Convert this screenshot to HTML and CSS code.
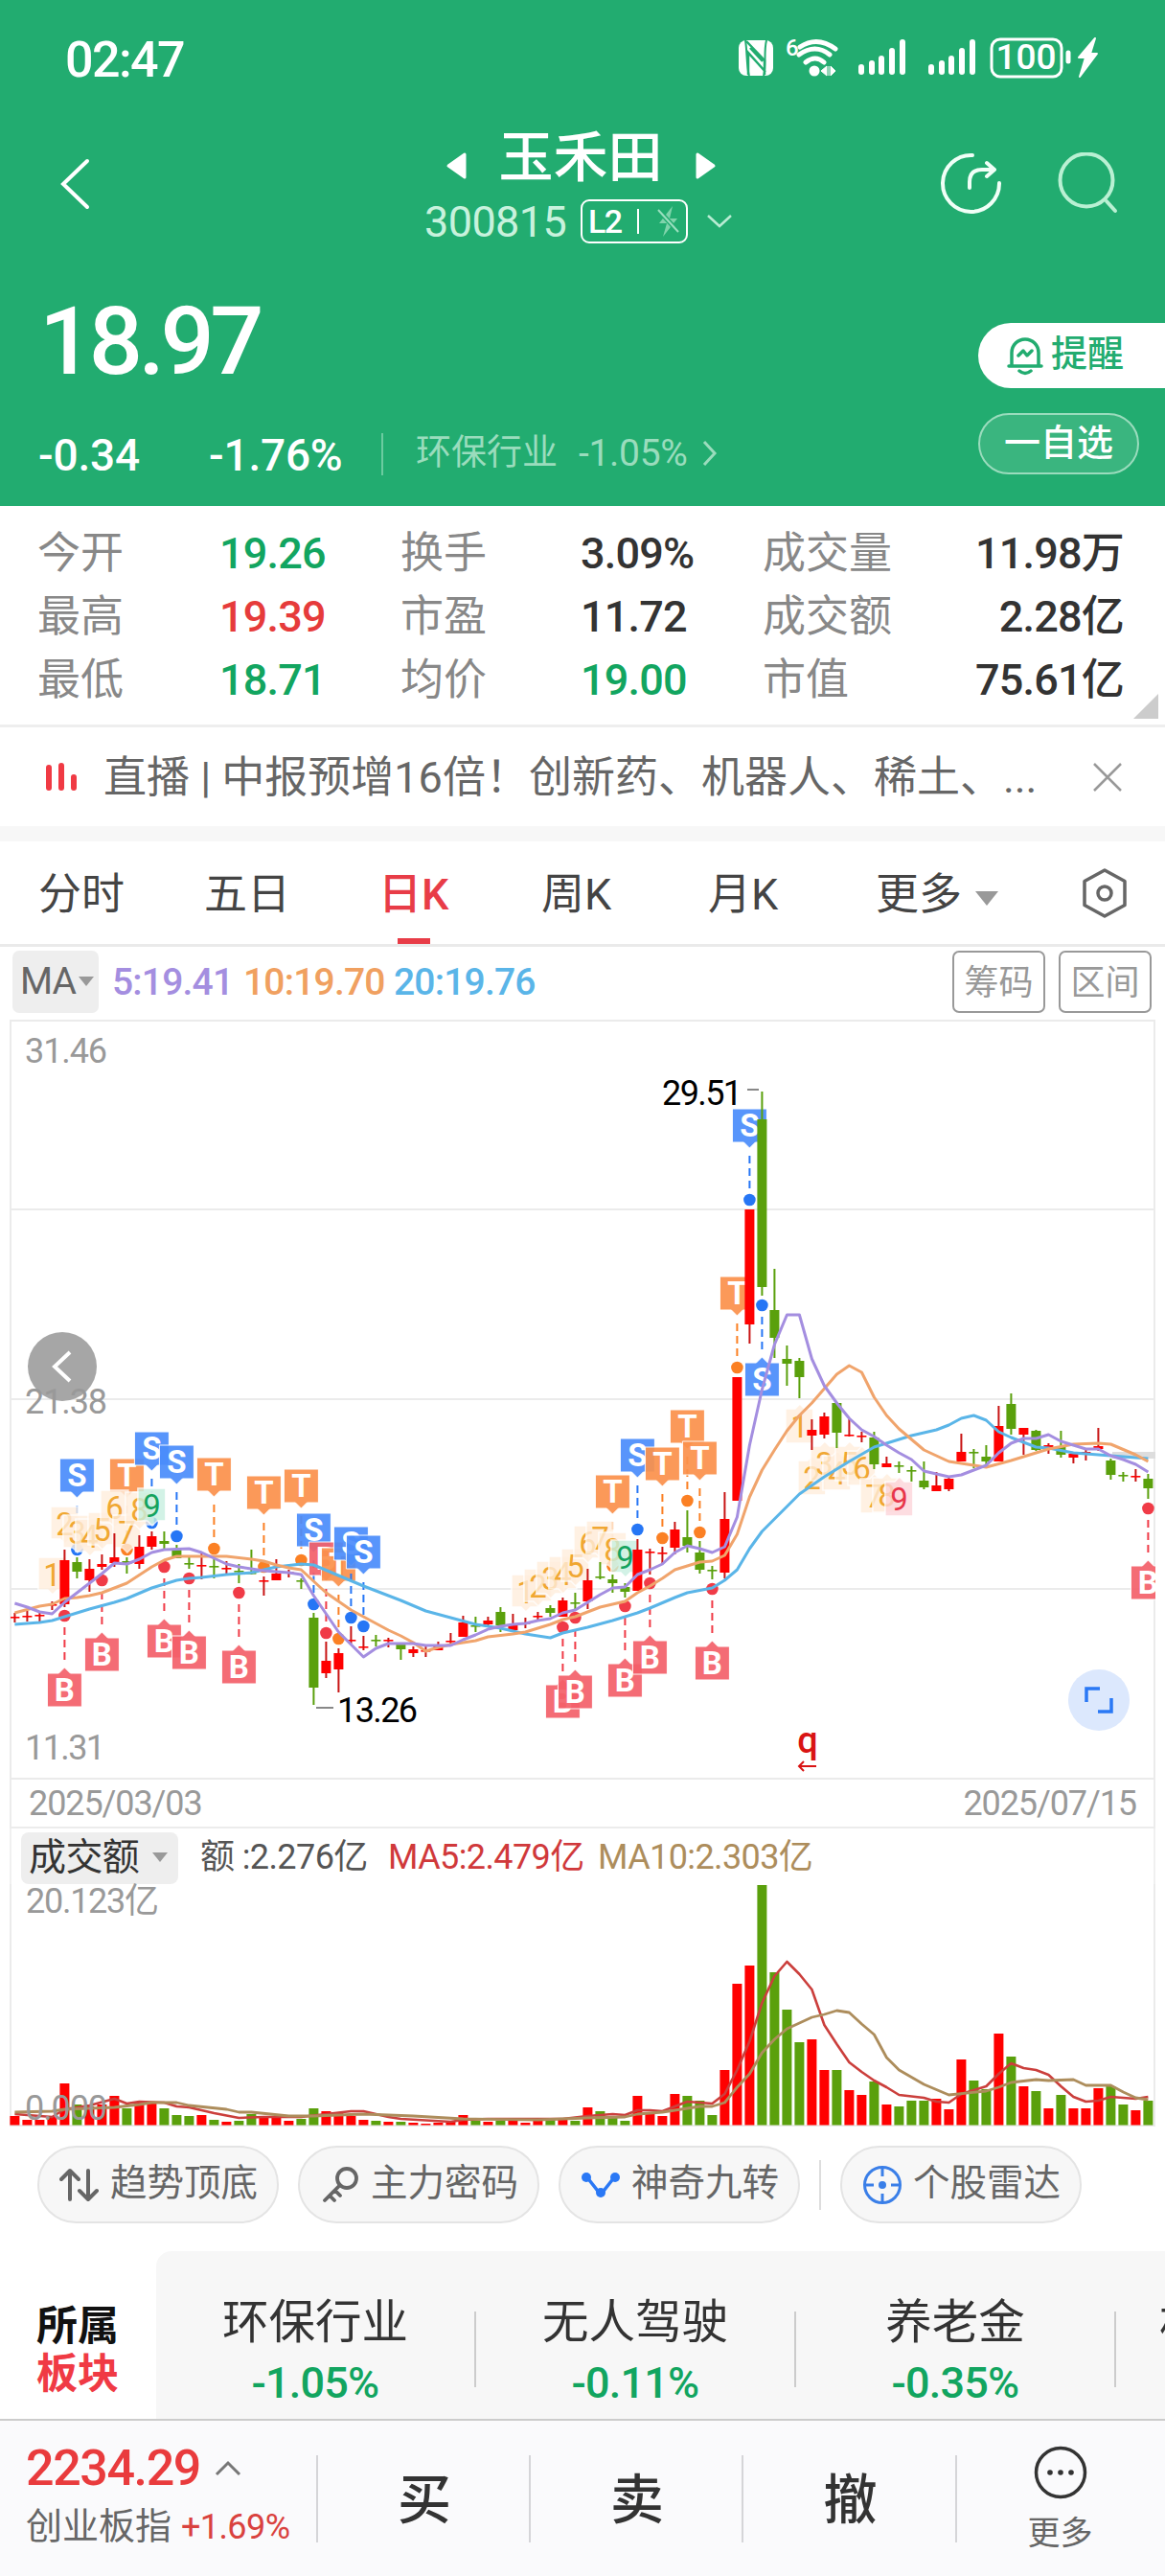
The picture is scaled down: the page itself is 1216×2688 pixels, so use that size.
FILE: index.html
```html
<!DOCTYPE html>
<html lang="zh-CN">
<head>
  <meta charset="UTF-8" />
  <meta name="viewport" content="width=device-width, initial-scale=1" />
  <title>玉禾田 300815</title>
  <link rel="stylesheet" href="styles.css">
</head>
<body>
  <header class="header">
    <div class="status-bar">
      <span class="time">02:47</span>
      <svg class="status-icons" width="380" height="50" viewBox="0 0 380 50" fill="none" stroke="#fff">
        <rect x="2" y="5" width="36" height="37" rx="8" fill="#fff" stroke="none"/>
        <path d="M9 5C11 17 10 30 13 43M31 5C28 17 31 30 28 43" stroke="#22ac70" stroke-width="2"/>
        <path d="M10 6L29 26V41M12 41V18L30 38M14 13L27 27" stroke="#22ac70" stroke-width="2.5"/>
        <text x="51" y="21" class="wifi-gen">6</text>
        <g stroke-width="5" stroke-linecap="round">
          <path d="M66 12Q84 0 103 14M65 20Q82 8 97 20M72 28Q82 20 91 28"/>
        </g>
        <circle cx="81" cy="37" r="5.5" fill="#fff" stroke="none"/>
        <path d="M88 37l6-5v10zM96 32v10M103 37l-5-5v10z" fill="#fff" stroke-width="1"/>
        <g stroke-width="6" stroke-linecap="round">
          <path d="M130 33v5M141 29v9M151 24v14M162 16v22M173 7v31"/>
          <path d="M203 33v5M214 29v9M224 24v14M235 16v22M246 7v31"/>
        </g>
        <rect x="266" y="4" width="73" height="39" rx="9" stroke-width="3"/>
        <text x="302" y="35" text-anchor="middle" class="battery">100</text>
        <path d="M346 18v9" stroke-width="5" stroke-linecap="round"/>
        <path d="M374 3L357 23h7l-6 20 18-24h-7z" fill="#fff" stroke="#fff" stroke-width="2" stroke-linejoin="round"/>
      </svg>
    </div>

    <div class="title-bar">
      <svg class="back" width="36" height="54" viewBox="0 0 36 54" fill="none" stroke="#fff" stroke-width="4"><path d="M31 3L6 27l25 24" stroke-linecap="round"/></svg>
      <div class="title">
        <div class="name-row">
          <svg width="22" height="30" viewBox="0 0 22 30"><path d="M20 3v24L3 15z" fill="#fff" stroke="#fff" stroke-width="3" stroke-linejoin="round"/></svg>
          <h1>玉禾田</h1>
          <svg width="22" height="30" viewBox="0 0 22 30"><path d="M2 3v24l17-12z" fill="#fff" stroke="#fff" stroke-width="3" stroke-linejoin="round"/></svg>
        </div>
        <div class="code-row">
          <span class="code">300815</span>
          <span class="level">L2<i></i>
            <svg width="24" height="34" viewBox="0 0 24 34"><path d="M16 1L2 19h8L6 33l15-19h-8z" fill="#7fd4ab"/><path d="M1 5l21 23" stroke="#22ac70" stroke-width="5"/><path d="M1 5l21 23" stroke="#9adfbf" stroke-width="2"/></svg>
          </span>
          <svg class="code-more" width="28" height="16" viewBox="0 0 28 16" fill="none" stroke="#b9ecd3" stroke-width="2.5"><path d="M2 2l12 11L26 2"/></svg>
        </div>
      </div>
      <div class="tools">
        <svg width="66" height="66" viewBox="0 0 66 66" fill="none" stroke="#f0fff7" stroke-width="4" stroke-linecap="round" stroke-linejoin="round"><path d="M34 3A29.500 29.500 0 1 0 62 32M31 37v-6q0-13 13-13h11M49 11l8 7-8 7"/></svg>
        <svg width="66" height="66" viewBox="0 0 66 66" fill="none" stroke="#b9f0d3" stroke-width="4" stroke-linecap="round"><circle cx="31" cy="29" r="27.500"/><path d="M52 51l9 10"/></svg>
      </div>
    </div>

    <div class="quote">
      <div class="price">18.97</div>
      <div class="remind">
        <svg width="38" height="42" viewBox="0 0 38 42" fill="none" stroke="#22ac70" stroke-width="3.500" stroke-linecap="round" stroke-linejoin="round"><path d="M5 31V18a14 14 0 0 1 28 0v13M2 32h34M13 37q6 5 12 0M12 21l5-5 4 5 5-5"/></svg>
        <span>提醒</span>
      </div>
    </div>
    <div class="change-row">
      <span class="chg">-0.34</span>
      <span class="chg">-1.76%</span>
      <i class="sep"></i>
      <span class="industry">环保行业</span>
      <span class="ind-pct">-1.05%</span>
      <svg width="16" height="28" viewBox="0 0 16 28" fill="none" stroke="#9adcbd" stroke-width="3"><path d="M2 2l11 12L2 26"/></svg>
      <span class="optional">一自选</span>
    </div>
  </header>

  <section class="stats">
    <span>今开</span><b class="down">19.26</b><span>换手</span><b>3.09%</b><span>成交量</span><b class="right">11.98万</b>
    <span>最高</span><b class="up">19.39</b><span>市盈</span><b>11.72</b><span>成交额</span><b class="right">2.28亿</b>
    <span>最低</span><b class="down">18.71</b><span>均价</span><b class="down">19.00</b><span>市值</span><b class="right">75.61亿</b>
    <i class="corner"></i>
  </section>

  <section class="notice">
    <svg width="36" height="32" viewBox="0 0 36 32" stroke="#f03a44" stroke-width="6" stroke-linecap="round"><path d="M4 6v21M17 4v23M30 16v11"/></svg>
    <p>直播 | 中报预增16倍！创新药、机器人、稀土、...</p>
    <svg width="30" height="30" viewBox="0 0 30 30" stroke="#999" stroke-width="2.500"><path d="M1 1l28 28M29 1L1 29"/></svg>
  </section>

  <nav class="tabs">
    <a>分时</a><a>五日</a><a class="active">日K</a><a>周K</a><a>月K</a><a>更多<i class="caret"></i></a>
    <svg width="50" height="54" viewBox="0 0 50 54" fill="none" stroke="#666" stroke-width="3.500" stroke-linejoin="round"><path d="M25 3L46 14.500v25L25 51 4 39.500v-25z"/><circle cx="25" cy="27" r="7"/></svg>
  </nav>

  <div class="ma-row">
    <span class="ma-pick">MA<i class="caret small"></i></span>
    <span class="ma5">5:19.41</span>
    <span class="ma10">10:19.70</span>
    <span class="ma20">20:19.76</span>
    <button class="first">筹码</button>
    <button>区间</button>
  </div>

  <svg id="kline" class="kline" width="1216" height="793" viewBox="0 1064 1216 793"></svg>
  <div class="dates"><span>2025/03/03</span><span>2025/07/15</span></div>
  <div class="vol-head">
    <span class="vol-pick">成交额<i class="caret small"></i></span>
    <span class="amount">额 :2.276亿</span>
    <span class="vma5">MA5:2.479亿</span>
    <span class="vma10">MA10:2.303亿</span>
  </div>
  <svg id="volume" class="volume" width="1216" height="254" viewBox="0 1966 1216 254"></svg>

  <div class="chips">
    <span class="chip"><svg width="42" height="40" viewBox="0 0 42 40" fill="none" stroke="#666" stroke-width="4" stroke-linecap="round" stroke-linejoin="round"><path d="M11 35V6M2 14l9-9 9 9M30 5v29M21 26l9 9 9-9"/></svg><span>趋势顶底</span></span>
    <span class="chip"><svg width="42" height="40" viewBox="0 0 42 40" fill="none" stroke="#666" stroke-width="3.800" stroke-linecap="round"><circle cx="28" cy="13" r="10"/><path d="M21 20L5 36M10 31l5 5M16 26l5 5"/></svg><span>主力密码</span></span>
    <span class="chip"><svg width="42" height="40" viewBox="0 0 42 40"><path d="M6 11l15 19L36 11" fill="none" stroke="#2a78f5" stroke-width="3.500"/><g fill="#2a78f5"><circle cx="6" cy="12" r="5"/><circle cx="36" cy="12" r="5"/><circle cx="21" cy="28" r="5"/></g></svg><span>神奇九转</span></span>
    <i class="chip-sep"></i>
    <span class="chip"><svg width="42" height="40" viewBox="0 0 42 40" fill="none" stroke="#3a7fe8" stroke-width="3"><circle cx="21" cy="20" r="18.500"/><path d="M21 2v9M21 29v9M3 20h9M30 20h9"/><circle cx="21" cy="20" r="2.500" fill="#3a7fe8"/></svg><span>个股雷达</span></span>
  </div>

  <section class="sectors">
    <div class="sector-label">所属<em>板块</em></div>
    <div class="sector-list">
      <div class="sector"><p>环保行业</p><b>-1.05%</b></div>
      <div class="sector"><p>无人驾驶</p><b>-0.11%</b></div>
      <div class="sector"><p>养老金</p><b>-0.35%</b></div>
      <div class="sector next"><p>机器人概念</p></div>
    </div>
  </section>

  <footer class="bottom">
    <div class="index">
      <div class="index-val">2234.29
        <svg width="28" height="18" viewBox="0 0 28 18" fill="none" stroke="#777" stroke-width="3"><path d="M2 15L14 3l12 12"/></svg>
      </div>
      <div class="index-name">创业板指<b>+1.69%</b></div>
    </div>
    <div class="action">买</div>
    <div class="action">卖</div>
    <div class="action">撤</div>
    <div class="more">
      <svg width="56" height="56" viewBox="0 0 56 56"><circle cx="28" cy="28" r="25.500" fill="none" stroke="#333" stroke-width="3.500"/><g fill="#333"><circle cx="17" cy="28" r="2.800"/><circle cx="28" cy="28" r="2.800"/><circle cx="39" cy="28" r="2.800"/></g></svg>
      更多
    </div>
  </footer>
  <script src="chart.js"></script>
</body>
</html>
```

FILE: styles.css
```css
* {
  box-sizing: border-box;
}
body {
  margin: 0;
  width: 1216px;
  height: 2688px;
  overflow: hidden;
  background: #fff;
  color: #333;
  font-family: Roboto, "Noto Sans CJK SC", sans-serif;
}
i, em {
  font-style: normal;
}
svg {
  display: block;
  flex: none;
}
h1, p {
  margin: 0;
  font-weight: 400;
}
b {
  font-weight: 400;
}
.header {
  height: 528px;
  background: #22ac70;
  color: #fff;
}
.status-bar {
  height: 124px;
  padding: 0 67px 0 68px;
  display: flex;
  align-items: center;
  justify-content: space-between;
}
.time {
  font-size: 52px;
  font-weight: 500;
  letter-spacing: -1.6px;
}
.status-icons text {
  fill: #fff;
  stroke: none;
}
.wifi-gen {
  font-size: 24px;
  font-weight: 500;
}
.battery {
  font-size: 37px;
  font-weight: 500;
}
.title-bar {
  height: 140px;
  padding: 0 43px 0 60px;
  display: grid;
  grid-template-columns: 366px 360px 1fr;
}
.back {
  margin-top: 41px;
}
.name-row {
  height: 76px;
  display: flex;
  justify-content: center;
  align-items: center;
  gap: 34px;
}
.name-row svg {
  margin-top: 22px;
}
.name-row h1 {
  padding-top: 6px;
  font-size: 57px;
  line-height: 80px;
  font-weight: 500;
}
.code-row {
  display: flex;
  align-items: center;
  height: 62px;
  padding-left: 17px;
}
.code {
  font-size: 45px;
  letter-spacing: -0.6px;
  color: #c8f2dd;
  width: 163px;
}
.level {
  width: 112px;
  height: 46px;
  border: 2px solid #fff;
  border-radius: 9px;
  display: flex;
  align-items: center;
  padding-left: 6px;
  font-size: 34px;
  font-weight: 500;
  letter-spacing: -1.5px;
}
.level i {
  width: 2px;
  height: 26px;
  background: #fff;
  margin: 0 19px 0 16px;
}
.code-more {
  margin-left: 19px;
}
.tools {
  display: flex;
  justify-content: flex-end;
  gap: 56px;
  padding: 35px 4px 0 0;
}
.quote {
  display: flex;
  justify-content: space-between;
  height: 167px;
  padding-left: 41px;
}
.price {
  font-size: 99px;
  line-height: 184px;
  font-weight: 500;
  letter-spacing: -4.5px;
}
.remind {
  margin-top: 73px;
  width: 195px;
  height: 68px;
  border-radius: 34px 0 0 34px;
  background: #fff;
  color: #22ac70;
  display: flex;
  align-items: center;
  gap: 8px;
  padding-left: 30px;
  font-size: 38px;
  line-height: 60px;
  font-weight: 500;
}
.remind span {
  padding-bottom: 4px;
}
.change-row {
  height: 64px;
  display: flex;
  align-items: center;
  padding: 0 27px 0 40px;
  white-space: nowrap;
}
.chg {
  width: 178px;
  font-size: 46px;
  letter-spacing: -0.2px;
  padding-top: 24px;
  font-weight: 500;
}
.change-row .sep {
  width: 2px;
  height: 44px;
  margin: 21px 34px 0 2px;
  background: #6ccba0;
}
.industry {
  font-size: 37px;
  line-height: 50px;
  color: #9adcbd;
  padding-top: 19px;
  width: 170px;
}
.ind-pct {
  font-size: 39px;
  letter-spacing: -0.3px;
  color: #9adcbd;
  padding-top: 20px;
  width: 129px;
}
.change-row svg {
  margin-top: 20px;
}
.optional {
  margin-left: auto;
  width: 168px;
  height: 64px;
  border: 2px solid #9adcbd;
  border-radius: 32px;
  background: #3ab57f;
  font-size: 38px;
  line-height: 59px;
  font-weight: 500;
  text-align: center;
}
.stats {
  height: 231px;
  border-bottom: 3px solid #eee;
  padding: 17px 43px 0 39px;
  display: grid;
  grid-template-columns: 190px 189px 188px 190px 160px 1fr;
  grid-auto-rows: 66px;
  line-height: 66px;
  font-size: 45px;
  color: #888;
  position: relative;
}
.stats b {
  color: #333;
  font-weight: 500;
  letter-spacing: -0.8px;
}
.stats .right {
  text-align: right;
}
.stats .up {
  color: #e63b3b;
}
.stats .down {
  color: #12a560;
}
.corner {
  position: absolute;
  right: 7px;
  bottom: 6px;
  border-left: 26px solid transparent;
  border-bottom: 26px solid #ccc;
}
.notice {
  height: 103px;
  display: flex;
  align-items: center;
  padding: 0 45px 0 47px;
  color: #666;
}
.notice p {
  flex: 1;
  margin-left: 25px;
  padding-top: 2px;
  font-size: 45px;
  line-height: 80px;
  white-space: nowrap;
}
.tabs {
  border-top: 16px solid #f7f7f7;
  border-bottom: 3px solid #eaeaea;
  height: 126px;
  padding: 0 38px 0 40px;
  display: grid;
  grid-template-columns: 173px 182px 170px 174px 175px 1fr 50px;
  align-items: center;
  font-size: 45px;
  color: #444;
}
.tabs a {
  height: 107px;
  line-height: 111px;
  white-space: nowrap;
}
.tabs .active {
  color: #e83c47;
  justify-self: start;
  font-weight: 500;
  background: linear-gradient(#e83c47, #e83c47) 50% 100% / 34px 6px no-repeat;
}
.caret {
  display: inline-block;
  vertical-align: middle;
  margin-left: 14px;
  border: 12px solid transparent;
  border-top: 15px solid #999;
  border-bottom: 0;
}
.caret.small {
  margin: -6px 0 0 3px;
  border-width: 10px 8px 0;
}
.ma-row {
  height: 76px;
  padding: 0 14px 3px 13px;
  display: flex;
  align-items: center;
  font-size: 39px;
  letter-spacing: -0.8px;
}
.ma-pick {
  width: 90px;
  height: 65px;
  border-radius: 7px;
  background: #eee;
  color: #666;
  line-height: 65px;
  padding-left: 8px;
  margin-right: 14px;
  white-space: nowrap;
}
.ma5 {
  color: #a48ee0;
  width: 137px;
}
.ma10 {
  color: #f0a060;
  width: 157px;
}
.ma20 {
  color: #5ab5e8;
}
.ma5, .ma10, .ma20 {
  font-weight: 500;
}
.ma-row button {
  width: 97px;
  height: 65px;
  margin-left: 14px;
  padding: 0 0 5px;
  background: #fff;
  border: 2px solid #999;
  border-radius: 7px;
  color: #999;
  font: 36px "Noto Sans CJK SC", sans-serif;
}
.ma-row .first {
  margin-left: auto;
}
.kline text, .volume text {
  font-family: Roboto, "Noto Sans CJK SC", sans-serif;
}
.volume {
  overflow: visible;
}
.axis {
  font-size: 36px;
  fill: #999;
}
.peak {
  font-size: 36px;
  fill: #000;
}
.mark {
  font-size: 33px;
  font-weight: 700;
  fill: #fff;
}
.nine {
  font-size: 33px;
}
.ex {
  font-size: 38px;
  font-weight: 500;
  fill: #d91414;
}
.dates {
  height: 51px;
  margin: 0 10px;
  padding: 0 18px;
  border: 2px solid #ececec;
  border-top: 0;
  display: flex;
  justify-content: space-between;
  align-items: center;
  font-size: 36px;
  letter-spacing: -1.1px;
  color: #999;
}
.vol-head {
  height: 58px;
  margin: 0 10px;
  padding: 4px 10px 0;
  border: solid #f0f0f0;
  border-width: 0 2px;
  display: flex;
  align-items: center;
  font-size: 36px;
  line-height: 50px;
  letter-spacing: -0.6px;
  white-space: nowrap;
}
.vol-head span {
  padding-bottom: 3px;
}
.vol-head .vol-pick {
  width: 164px;
  height: 54px;
  line-height: 53px;
  border-radius: 8px;
  background: #eee;
  padding: 0 0 0 8px;
  font-size: 39px;
  margin-right: 23px;
}
.vol-pick .caret {
  margin-left: 14px;
}
.amount {
  color: #555;
  width: 196px;
}
.vma5 {
  color: #d0393b;
  width: 219px;
}
.vma10 {
  color: #ad8d5c;
}
.chips {
  padding: 19px 39px 0;
  display: flex;
  align-items: center;
  gap: 20px;
}
.chip {
  width: 252px;
  height: 81px;
  border: 2px solid #e4e4e4;
  border-radius: 41px;
  background: #f7f7f7;
  display: flex;
  align-items: center;
  gap: 11px;
  padding-left: 21px;
  font-size: 38.5px;
  line-height: 60px;
  color: #666;
  white-space: nowrap;
}
.chip span {
  padding-bottom: 4px;
}
.chip-sep {
  width: 2px;
  height: 52px;
  background: #ddd;
}
.sectors {
  margin-top: 29px;
  height: 175px;
  display: flex;
  overflow: hidden;
}
.sector-label {
  width: 163px;
  padding: 53px 0 0 38px;
  font-size: 43px;
  line-height: 50px;
  font-weight: 700;
  color: #111;
}
.sector-label em {
  display: block;
  color: #f03a44;
}
.sector-list {
  flex: 1;
  display: flex;
  overflow: hidden;
  background: #f7f7f7;
  border-top-left-radius: 16px;
}
.sector {
  flex: 0 0 334px;
  padding: 43px 2px 0 0;
  text-align: center;
  background: linear-gradient(#ccc, #ccc) 100% 63px / 2px 79px no-repeat;
}
.sector p {
  font-size: 48.5px;
  line-height: 64px;
}
.sector b {
  display: block;
  font-size: 45px;
  font-weight: 500;
  line-height: 62px;
  letter-spacing: -0.8px;
  color: #12a560;
}
.sector.next {
  background: none;
  text-align: left;
  padding-left: 45px;
  white-space: nowrap;
}
.bottom {
  height: 164px;
  border-top: 2px solid #ccc;
  background: #fafafc;
  display: grid;
  grid-template-columns: 332px 222px 222px 223px 1fr;
}
.index, .action {
  background: linear-gradient(#d5d5d8, #d5d5d8) 100% 36px / 2px 91px no-repeat;
}
.index {
  padding: 19px 0 0 27px;
}
.index-val {
  display: flex;
  align-items: center;
  gap: 15px;
  font-size: 52px;
  font-weight: 500;
  line-height: 62px;
  letter-spacing: -1.4px;
  color: #e93b3d;
}
.index-name {
  display: flex;
  align-items: center;
  gap: 10px;
  font-size: 38px;
  line-height: 57px;
  color: #666;
}
.index-name b {
  padding-top: 2px;
  font-size: 36px;
  letter-spacing: -0.6px;
  color: #d9423f;
}
.action {
  font-size: 56px;
  line-height: 166px;
  font-weight: 500;
  text-align: center;
}
.more {
  padding: 26px 2px 0 0;
  font-size: 34px;
  line-height: 56px;
  color: #666;
  text-align: center;
}
.more svg {
  margin: 0 auto 7px;
}
```

FILE: chart.js
```js
const RED = '#ff0000', GREEN = '#5aa00c';
const px = i => 15.4 + 13 * i;

// high, body top, body bottom, low, 1 = up / 0 = down
const candles = [
  [1683,1687,1689,1693,1],[1681,1686,1688,1692,1],[1682,1685,1687,1694,1],[1671,1674,1676,1680,1],
  [1617,1628,1674,1677,1],[1625,1630,1640,1647,0],[1627,1637,1649,1661,1],[1622,1632,1635,1638,1],
  [1600,1625,1631,1635,1],[1625,1629,1632,1642,0],[1602,1614,1632,1637,1],[1598,1603,1614,1617,1],
  [1598,1608,1611,1616,0],[1612,1617,1626,1626,0],[1623,1631,1633,1637,0],[1620,1633,1635,1648,1],
  [1627,1634,1636,1647,0],[1629,1636,1638,1642,1],[1632,1639,1641,1652,0],[1617,1641,1643,1643,0],
  [1645,1649,1651,1665,1],[1627,1642,1649,1649,1],[1638,1640,1642,1646,1],[1647,1649,1651,1658,0],
  [1683,1688,1761,1779,0],[1713,1733,1746,1751,1],[1720,1725,1742,1766,1],[1697,1711,1713,1715,1],
  [1707,1718,1720,1722,1],[1706,1711,1713,1718,0],[1709,1711,1713,1719,1],[1715,1716,1721,1732,0],
  [1718,1721,1725,1729,1],[1718,1722,1724,1729,1],[1713,1718,1722,1722,1],[1704,1712,1714,1716,1],
  [1686,1693,1708,1708,1],[1687,1696,1698,1703,0],[1687,1691,1695,1697,1],[1677,1682,1696,1703,0],
  [1684,1695,1701,1702,1],[1688,1693,1695,1699,1],[1682,1686,1688,1690,1],[1675,1678,1683,1687,0],
  [1667,1670,1687,1687,1],[1662,1672,1674,1679,0],[1637,1649,1671,1679,1],[1630,1645,1647,1648,0],
  [1643,1648,1652,1662,0],[1652,1656,1661,1667,0],[1606,1617,1660,1660,1],[1616,1619,1621,1643,1],
  [1614,1620,1622,1631,1],[1588,1596,1615,1622,1],[1576,1604,1613,1620,0],[1608,1620,1638,1642,0],
  [1634,1638,1640,1648,0],[1557,1585,1641,1647,1],[1437,1437,1566,1566,1],[1262,1262,1382,1402,1],
  [1139,1168,1343,1352,0],[1324,1367,1396,1417,0],[1404,1418,1423,1446,0],[1417,1420,1437,1459,0],
  [1481,1492,1498,1513,1],[1474,1478,1497,1501,1],[1463,1464,1495,1511,0],[1481,1497,1499,1499,1],
  [1494,1498,1500,1505,1],[1494,1500,1528,1533,0],[1520,1527,1531,1531,1],[1525,1529,1531,1537,0],
  [1530,1534,1536,1546,0],[1525,1545,1552,1554,0],[1536,1550,1556,1556,1],[1540,1543,1554,1556,1],
  [1496,1515,1525,1525,1],[1512,1515,1517,1532,0],[1508,1520,1525,1529,0],[1467,1488,1525,1525,1],
  [1454,1465,1491,1497,0],[1490,1490,1497,1518,1],[1492,1493,1513,1514,0],[1506,1508,1511,1517,1],
  [1493,1509,1518,1521,0],[1515,1517,1521,1527,1],[1511,1515,1518,1524,1],[1490,1509,1512,1514,1],
  [1522,1524,1539,1544,0],[1536,1539,1541,1546,0],[1533,1540,1542,1546,1],[1538,1543,1553,1564,0]
];

// index, y
const ma5 = [[0,1673],[1,1677],[2,1682],[3,1684],[4,1672],[5,1662],[6,1652],[7,1642],[8,1631],[9,1632],[10,1627],[11,1620],[12,1617],[14,1616],[15,1620],[16,1626],[17,1632],[18,1635],[20,1639],[22,1641],[23,1643],[24,1665],[25,1684],[26,1703],[27,1716],[28,1729],[29,1720],[30,1715],[32,1715],[33,1717],[35,1717],[36,1711],[37,1706],[38,1700],[39,1697],[40,1695],[41,1694],[42,1691],[43,1689],[44,1683],[45,1680],[46,1672],[47,1664],[48,1657],[49,1656],[50,1643],[51,1638],[52,1632],[53,1620],[54,1613],[55,1616],[56,1620],[57,1614],[58,1583],[59,1508],[60,1450],[61,1403],[62,1372],[63,1372],[64,1418],[65,1446],[66,1464],[67,1480],[68,1492],[69,1499],[70,1508],[71,1516],[72,1523],[73,1535],[74,1538],[75,1541],[76,1539],[77,1534],[78,1529],[79,1516],[80,1506],[81,1501],[82,1501],[83,1497],[84,1504],[85,1508],[86,1512],[87,1512],[88,1519],[89,1523],[90,1528],[91,1536]];
const ma10 = [[0,1683],[2,1676],[3,1674],[4,1668],[5,1667],[6,1665],[7,1662],[9,1652],[11,1635],[12,1628],[13,1624],[17,1624],[19,1627],[20,1629],[21,1633],[22,1636],[23,1638],[24,1650],[25,1662],[26,1671],[27,1680],[28,1687],[29,1694],[30,1701],[31,1707],[32,1714],[33,1723],[34,1719],[35,1716],[37,1712],[38,1708],[40,1705],[41,1703],[42,1699],[43,1695],[44,1690],[45,1687],[47,1677],[49,1671],[50,1662],[51,1655],[52,1647],[53,1638],[54,1634],[55,1630],[56,1629],[57,1623],[58,1601],[59,1562],[60,1534],[61,1513],[62,1493],[63,1477],[64,1464],[65,1449],[66,1434],[67,1425],[68,1432],[69,1458],[70,1477],[71,1491],[73,1513],[75,1525],[77,1529],[78,1531],[80,1524],[83,1512],[85,1507],[87,1506],[88,1507],[90,1518],[91,1525]];
const ma20 = [[0,1695],[2,1693],[3,1691],[4,1687],[6,1679],[8,1672],[9,1668],[11,1657],[13,1649],[14,1647],[15,1646],[17,1643],[19,1641],[21,1635],[23,1632],[24,1633],[26,1644],[28,1655],[30,1665],[31,1670],[33,1681],[35,1688],[37,1695],[39,1699],[41,1705],[43,1709],[44,1704],[46,1698],[48,1691],[50,1683],[51,1678],[53,1667],[54,1662],[56,1657],[57,1649],[58,1638],[59,1616],[60,1598],[62,1572],[63,1559],[65,1541],[67,1525],[69,1510],[70,1506],[72,1498],[73,1495],[74,1492],[75,1487],[76,1480],[77,1477],[78,1482],[79,1494],[80,1500],[82,1510],[83,1511],[85,1516],[88,1519],[91,1522]];

// index, letter, dot y, 1 = flag above the dot / -1 = below
const marks = [
  [5,'S',1617,1],[9,'T',1617,1],[11,'S',1589,1],[13,'S',1603,1],[16,'T',1616,1],[20,'T',1635,1],[23,'T',1628,1],
  [24,'S',1674,1],[25,'B',1704,1],[26,'T',1710,1],[27,'S',1688,1],[28,'S',1697,1],
  [4,'B',1686,-1],[7,'B',1649,-1],[12,'B',1635,-1],[14,'B',1647,-1],[18,'B',1662,-1],
  [44,'B',1698,-1],[45,'B',1688,-1],[49,'B',1676,-1],[51,'B',1652,-1],[56,'B',1658,-1],
  [48,'T',1634,1],[50,'S',1596,1],[52,'T',1605,1],[54,'T',1566,1],[55,'T',1599,1],
  [58,'T',1427,1],[59,'S',1252,1],[60,'S',1362,-1],[91,'B',1574,-1]
];
const markColor = { S: ['#4a8dfb', '#2676f5'], T: ['#fb914b', '#fb8024'], B: ['#f4606a', '#f03b47'] };

// nine-turn counters: first index, number centres, pointer side
const turns = [
  [3, [1643,1590,1599,1603,1596,1573,1599,1575,1571], 1, '#14a35e', '#c8f0e0'],
  [41, [1661,1655,1647,1642,1634,1610,1605,1617,1625], 1, '#14a35e', '#c8f0e0'],
  [63, [1488,1542,1527,1537,1527,1532,1561,1560,1564], -1, '#e8364a', '#fdd5da']
];

// bar top, 1 = up / 0 = down
const vols = [
  [2208,1],[2212,1],[2212,1],[2209,1],[2174,1],[2196,0],[2198,1],[2196,1],[2187,1],[2200,0],[2194,1],[2195,1],
  [2200,0],[2207,0],[2208,0],[2207,1],[2212,0],[2214,1],[2213,0],[2206,0],[2209,1],[2209,1],[2213,1],[2211,0],
  [2200,0],[2203,1],[2204,1],[2208,1],[2212,1],[2213,0],[2214,1],[2214,0],[2215,1],[2216,1],[2215,1],[2213,1],
  [2207,1],[2213,0],[2214,1],[2213,0],[2213,1],[2215,1],[2213,1],[2210,0],[2211,1],[2213,0],[2199,1],[2203,0],
  [2210,0],[2213,0],[2187,1],[2206,1],[2208,1],[2185,1],[2187,0],[2192,0],[2207,0],[2160,1],[2070,1],[2051,1],
  [1967,0],[2058,0],[2097,0],[2131,0],[2128,1],[2160,1],[2160,0],[2181,1],[2186,1],[2172,0],[2196,1],[2198,0],
  [2192,0],[2192,0],[2190,1],[2201,1],[2149,1],[2171,0],[2180,0],[2122,1],[2146,0],[2177,1],[2182,0],[2200,1],
  [2186,0],[2200,1],[2200,1],[2179,1],[2177,0],[2196,0],[2202,1],[2192,0]
];
const vma5 = [[0,2206],[3,2209],[4,2201],[6,2197],[8,2190],[9,2195],[10,2193],[12,2194],[13,2198],[14,2199],[16,2205],[18,2210],[20,2209],[23,2209],[25,2206],[27,2203],[28,2203],[30,2209],[31,2211],[35,2214],[36,2212],[38,2211],[44,2211],[46,2208],[48,2206],[49,2207],[50,2202],[51,2202],[52,2203],[53,2198],[54,2193],[55,2194],[56,2195],[57,2185],[58,2160],[59,2130],[60,2090],[61,2062],[62,2047],[63,2060],[64,2076],[65,2113],[66,2133],[67,2152],[68,2162],[69,2171],[70,2178],[71,2186],[73,2189],[74,2193],[75,2194],[76,2185],[77,2181],[78,2177],[79,2164],[80,2153],[81,2158],[82,2160],[83,2165],[84,2177],[85,2188],[86,2193],[87,2192],[88,2188],[89,2189],[90,2190],[91,2188]];
const vma10 = [[0,2204],[3,2203],[4,2201],[8,2199],[10,2196],[11,2194],[13,2194],[14,2197],[17,2201],[18,2204],[19,2204],[22,2208],[24,2208],[28,2206],[32,2208],[36,2211],[42,2212],[46,2210],[49,2209],[50,2206],[52,2204],[54,2200],[55,2198],[56,2198],[57,2194],[58,2178],[59,2164],[60,2142],[61,2128],[62,2117],[64,2105],[65,2102],[66,2098],[67,2100],[68,2112],[69,2123],[70,2147],[71,2160],[73,2175],[75,2186],[78,2182],[79,2178],[80,2173],[82,2170],[83,2171],[85,2170],[86,2176],[88,2176],[89,2183],[90,2189],[91,2191]];

function line(points, color, width) {
  const d = points.map(p => `${px(p[0])},${p[1]}`).join(' ');
  return `<polyline points="${d}" fill="none" stroke="${color}" stroke-width="${width}" stroke-linejoin="round"/>`;
}

function flag(i, letter, dot, dir) {
  const x = px(i);
  const top = dir > 0 ? dot - 95 : dot + 60;
  const [box, strong] = markColor[letter];
  const tip = dir > 0
    ? `M${x - 18} ${top}h36v35h-12l-6 6l-6 -6h-12z`
    : `M${x - 18} ${top}h12l6 -6l6 6h12v35h-36z`;
  const from = dir > 0 ? top + 49 : dot + 12;
  const to = dir > 0 ? dot - 9 : top - 10;
  return `<path d="M${x} ${from}V${to}" stroke="${strong}" stroke-width="2" stroke-dasharray="8 5"/>
    <circle cx="${x}" cy="${dot}" r="6.300" fill="${strong}"/>
    <path d="${tip}" fill="${box}" stroke="#fff" stroke-width="1" opacity="0.920"/>
    <text class="mark" x="${x}" y="${top + 29}" text-anchor="middle">${letter}</text>`;
}

function turn([start, ys, dir, lastInk, lastBg]) {
  return ys.map((y, k) => {
    const x = px(start + k), last = k === 8;
    const top = y - 18;
    const tip = dir > 0
      ? `M${x - 14.5} ${top}h29v34h-9l-5 5l-5 -5h-10z`
      : `M${x - 14.5} ${top}h10l5 -5l5 5h9v36h-29z`;
    return `<path d="${tip}" fill="${last ? lastBg : '#ffeedd'}" stroke="#fff" stroke-width="1.500" opacity="0.800"/>
      <text class="nine" x="${x}" y="${y + 12}" text-anchor="middle" fill="${last ? lastInk : '#f0a732'}">${k + 1}</text>`;
  }).join('');
}

function candle([hi, top, bottom, lo, up], i) {
  const x = px(i), doji = bottom - top < 3, color = up ? RED : GREEN;
  const wick = up ? '#c81414' : GREEN;
  return `<path d="M${x} ${hi}V${lo}" stroke="${wick}" stroke-width="2"/>
    <rect x="${x - 5}" y="${top}" width="10" height="${doji ? 1.6 : bottom - top}" fill="${color}"/>`;
}

document.getElementById('kline').innerHTML = `
  <defs><clipPath id="frame"><rect x="11" y="1064" width="1195" height="793"/></clipPath></defs>
  <path d="M11 1065H1205M11 1262H1205M11 1460H1205M11 1658H1205M11 1856H1205M11 1064V1857M1205 1064V1857" stroke="#ebebeb" stroke-width="2"/>
  <circle cx="65" cy="1426" r="36" fill="#a6a6a6"/>
  <path d="M73 1411l-16 15 16 15" fill="none" stroke="#fff" stroke-width="4"/>
  <text class="axis" x="26" y="1109" textLength="86">31.46</text>
  <text class="axis" x="26" y="1475" textLength="86">21.38</text>
  <text class="axis" x="26" y="1836" textLength="84">11.31</text>
  <rect x="1161" y="1515" width="45" height="7" fill="#ddd"/>
  <g clip-path="url(#frame)">
    ${marks.map(m => flag(...m)).join('')}
    ${turns.map(turn).join('')}
    ${candles.map(candle).join('')}
    ${line(ma20, '#5ab5e8', 3)}${line(ma10, '#f0a46c', 3)}${line(ma5, '#a48ee0', 3)}
  </g>
  <path d="M780 1137h12M330 1782h18" stroke="#888" stroke-width="2"/>
  <text class="peak" x="691" y="1153" textLength="84">29.51</text>
  <text class="peak" x="352" y="1797" textLength="84">13.26</text>
  <text class="ex" x="843" y="1829" text-anchor="middle">q</text>
  <path d="M852 1843h-18M839 1838l-5 5 5 5" fill="none" stroke="#d91414" stroke-width="2"/>
  <circle cx="1147" cy="1774" r="32" fill="#dce8fd"/>
  <path d="M1134 1776v-14h14M1160 1772v14h-14" fill="none" stroke="#2a78f5" stroke-width="3.500"/>`;

document.getElementById('volume').innerHTML = `
  <path d="M11 1966V2219M1205 1966V2219M11 2218H1205" stroke="#ebebeb" stroke-width="2"/>
  ${vols.map(([top, up], i) => `<rect x="${px(i) - 5}" y="${top}" width="10" height="${2217.5 - top}" fill="${up ? RED : GREEN}"/>`).join('')}
  ${line(vma5, '#cb3f3c', 2.6)}${line(vma10, '#ad8d5c', 2.8)}
  <text class="axis" x="27" y="1996" textLength="139">20.123亿</text>
  <text class="axis" x="26" y="2212" textLength="86">0.000</text>`;
```
